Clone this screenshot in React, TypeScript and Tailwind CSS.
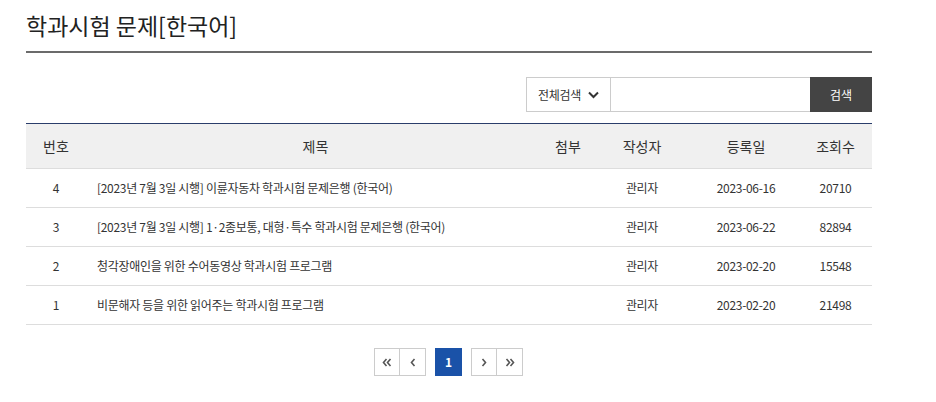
import React from "react";

const rows = [
  { no: 4, title: "[2023년 7월 3일 시행] 이륜자동차 학과시험 문제은행 (한국어)", author: "관리자", date: "2023-06-16", views: "20710" },
  { no: 3, title: "[2023년 7월 3일 시행] 1·2종보통, 대형·특수 학과시험 문제은행 (한국어)", author: "관리자", date: "2023-06-22", views: "82894" },
  { no: 2, title: "청각장애인을 위한 수어동영상 학과시험 프로그램", author: "관리자", date: "2023-02-20", views: "15548" },
  { no: 1, title: "비문해자 등을 위한 읽어주는 학과시험 프로그램", author: "관리자", date: "2023-02-20", views: "21498" },
];

const font = { fontFamily: '"Noto Sans CJK KR", "Noto Sans", sans-serif' };

export default function App() {
  return (
    <div className="w-[936px] h-[402px] bg-white text-[#333]" style={font}>
      <div className="ml-[26px] w-[846px]">
        <h1 className="pt-[9px] h-[51px] text-[23px] leading-[32px] text-[#222] font-normal">학과시험 문제[한국어]</h1>
        <div className="h-[2px] bg-[#6b6b6b]" />
        <div className="mt-[24px] flex justify-end">
          <div className="flex h-[35px] border border-[#ccc] border-r-0">
            <button className="w-[84px] flex items-center justify-center gap-[7px] text-[12px] tracking-[-0.3px] text-[#333] border-r border-[#ccc]">
              전체검색
              <svg width="11" height="8" viewBox="0 0 11 8"><path d="M1 1.5 L5.5 6 L10 1.5" fill="none" stroke="#333" strokeWidth="2" /></svg>
            </button>
            <div className="w-[199px]" />
          </div>
          <button className="w-[62px] h-[35px] bg-[#444] text-white text-[12px]">검색</button>
        </div>
        <table className="mt-[11px] w-full border-collapse text-[12px] tracking-[-0.3px] border-t border-t-[#2a3d6b]">
          <thead>
            <tr className="h-[45px] bg-[#f0f0f0] text-[14px] tracking-normal text-[#333]">
              <th className="w-[60px] font-normal">번호</th>
              <th className="font-normal">제목</th>
              <th className="w-[46px] font-normal">첨부</th>
              <th className="w-[102px] font-normal">작성자</th>
              <th className="w-[106px] font-normal">등록일</th>
              <th className="w-[73px] font-normal">조회수</th>
            </tr>
          </thead>
          <tbody>
            {rows.map((r) => (
              <tr key={r.no} className="h-[39px] border-t border-[#ddd]">
                <td className="text-center">{r.no}</td>
                <td className="pl-[11px]">{r.title}</td>
                <td></td>
                <td className="text-center">{r.author}</td>
                <td className="text-center">{r.date}</td>
                <td className="text-center">{r.views}</td>
              </tr>
            ))}
            <tr className="border-t border-[#ddd]"><td colSpan={6}></td></tr>
          </tbody>
        </table>
        <div className="mt-[23px] flex justify-center items-center gap-[9px] pr-[1px]">
          <div className="flex border border-[#ccc] h-[28px]">
            <button className="w-[25px] flex items-center justify-center border-r border-[#ccc] text-[#555]">
              <svg width="10" height="9" viewBox="0 0 10 9"><path d="M4.5 1 L1.5 4.5 L4.5 8 M8.5 1 L5.5 4.5 L8.5 8" fill="none" stroke="#555" strokeWidth="1.6" /></svg>
            </button>
            <button className="w-[25px] flex items-center justify-center">
              <svg width="6" height="9" viewBox="0 0 6 9"><path d="M4.5 1 L1.5 4.5 L4.5 8" fill="none" stroke="#555" strokeWidth="1.6" /></svg>
            </button>
          </div>
          <button className="w-[27px] h-[28px] bg-[#1a52a8] text-white text-[12px] font-bold">1</button>
          <div className="flex border border-[#ccc] h-[28px]">
            <button className="w-[25px] flex items-center justify-center border-r border-[#ccc]">
              <svg width="6" height="9" viewBox="0 0 6 9"><path d="M1.5 1 L4.5 4.5 L1.5 8" fill="none" stroke="#555" strokeWidth="1.6" /></svg>
            </button>
            <button className="w-[25px] flex items-center justify-center">
              <svg width="10" height="9" viewBox="0 0 10 9"><path d="M1.5 1 L4.5 4.5 L1.5 8 M5.5 1 L8.5 4.5 L5.5 8" fill="none" stroke="#555" strokeWidth="1.6" /></svg>
            </button>
          </div>
        </div>
      </div>
    </div>
  );
}
